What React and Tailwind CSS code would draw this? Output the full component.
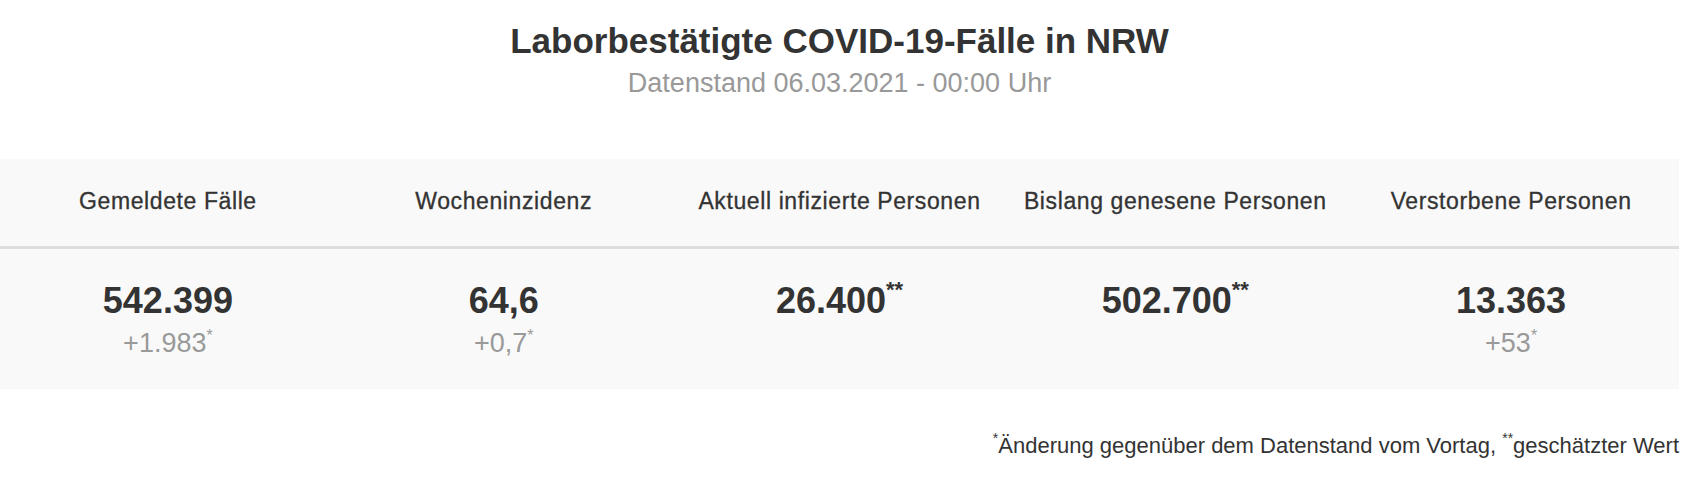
import React from 'react';

const stats = [
  { label: 'Gemeldete Fälle', value: '542.399', change: '+1.983' },
  { label: 'Wocheninzidenz', value: '64,6', change: '+0,7' },
  { label: 'Aktuell infizierte Personen', value: '26.400', estimated: true },
  { label: 'Bislang genesene Personen', value: '502.700', estimated: true },
  { label: 'Verstorbene Personen', value: '13.363', change: '+53' },
];

const App = () => {
  return (
    <div className="w-[1679px] bg-white font-['Liberation_Sans',Arial,sans-serif] text-[#333]">
      <div className="pt-[21px] text-center">
        <h1 className="text-[35px] font-bold leading-[40px]">Laborbestätigte COVID-19-Fälle in NRW</h1>
        <p className="mt-[6px] text-[27px] leading-[32px] text-[#999]">Datenstand 06.03.2021 - 00:00 Uhr</p>
      </div>

      <div className="mt-[60px] bg-[#f9f9f9]">
        <div className="grid h-[90px] grid-cols-5 items-center border-b-[3px] border-[#ddd] pb-[3px]">
          {stats.map((s) => (
            <div
              key={s.label}
              className="text-center text-[23px] leading-[24px] tracking-[0.6px] [-webkit-text-stroke:0.3px_#333]"
            >
              {s.label}
            </div>
          ))}
        </div>
        <div className="grid h-[140px] grid-cols-5 pt-[32px]">
          {stats.map((s) => (
            <div key={s.label} className="text-center">
              <div className="text-[36px] font-bold leading-[40px]">
                {s.value}
                {s.estimated && <sup className="top-[-16px] text-[22px]">**</sup>}
              </div>
              {s.change && (
                <div className="mt-[8px] text-[27px] leading-[28px] text-[#999]">
                  {s.change}
                  <sup className="top-[-11px] text-[16px]">*</sup>
                </div>
              )}
            </div>
          ))}
        </div>
      </div>

      <p className="mt-[45px] text-right text-[22px] leading-[24px]">
        <sup className="top-[-10px] text-[14px]">*</sup>Änderung gegenüber dem Datenstand vom Vortag,{' '}
        <sup className="top-[-10px] text-[14px]">**</sup>geschätzter Wert
      </p>
    </div>
  );
};

export default App;
